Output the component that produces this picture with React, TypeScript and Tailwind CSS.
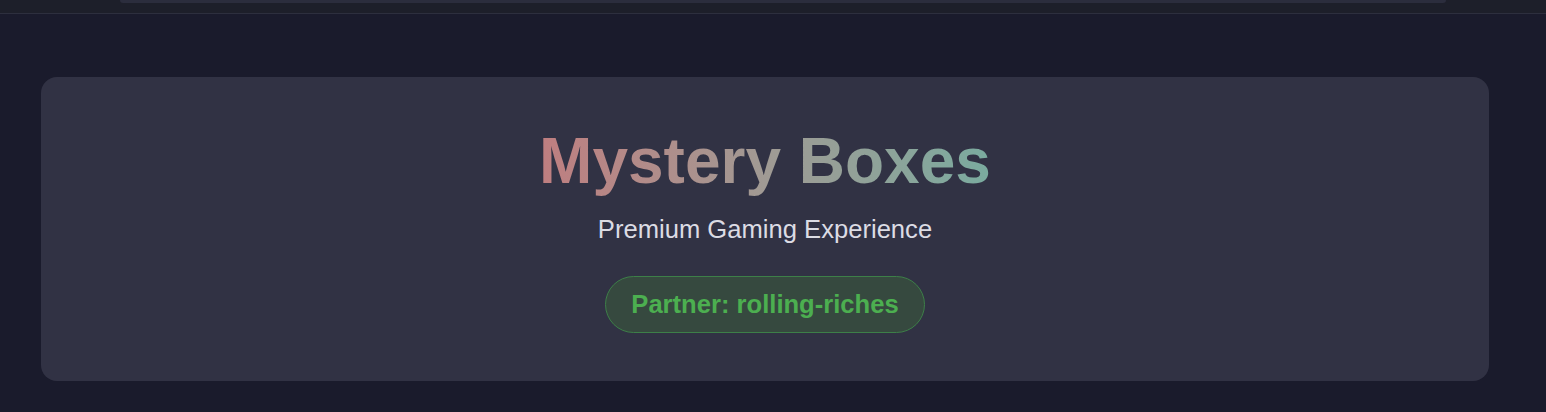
export default function App() {
  return (
    <div
      className="min-h-[412px] w-full bg-[#1a1b2c] text-white"
      style={{ fontFamily: '"Liberation Sans", Arial, sans-serif' }}
    >
      <header className="h-[14px] border-b border-[#2d2f3e] bg-[#1d1f2a] px-[120px] pr-[100px]">
        <div className="h-[3px] rounded-b-[8px] bg-[#2b2d3d]" />
      </header>
      <main className="pt-[63px] pb-[32px] pl-[41px]">
        <section className="flex w-[1448px] flex-col items-center rounded-[16px] bg-[#313244] px-12 pt-12 pb-12">
          <h1 className="bg-gradient-to-r from-[#bf7e80] via-[#a09a94] to-[#7aab9f] bg-clip-text text-[64px] font-bold leading-[1.15] text-transparent">
            Mystery Boxes
          </h1>
          <p className="mt-4 text-[25.6px] leading-[1.15] text-[#dcdce4]">
            Premium Gaming Experience
          </p>
          <div className="mt-8 rounded-full border border-[#3d7f48] bg-[#36493f] px-[25px] py-[13px] text-[25.6px] font-bold leading-[1.15] text-[#4caf50]">
            Partner: rolling-riches
          </div>
        </section>
      </main>
    </div>
  );
}
